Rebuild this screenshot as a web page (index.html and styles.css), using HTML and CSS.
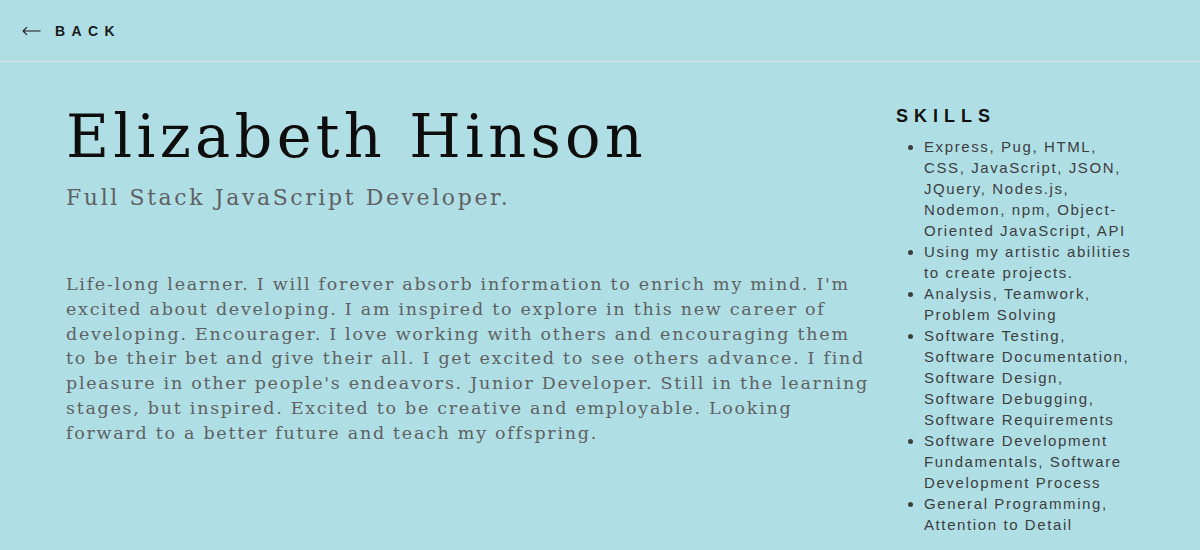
FILE: index.html
```html
<!DOCTYPE html>
<html>
<head>
<meta charset="utf-8">
<link rel="stylesheet" href="styles.css">
</head>
<body>
<header class="topbar">
  <a class="back" href="#"><svg class="arrow" width="19" height="10" viewBox="0 0 19 10"><path d="M1 5H18.5M1 5L5 1.2M1 5L5 8.8" fill="none" stroke="#1a1a1a" stroke-width="1.1"/></svg><span class="back-label">BACK</span></a>
</header>
<main class="page">
  <section class="intro">
    <h1 class="name">Elizabeth Hinson</h1>
    <h2 class="role">Full Stack JavaScript Developer.</h2>
    <p class="bio">Life-long learner. I will forever absorb information to enrich my mind. I'm excited about developing. I am inspired to explore in this new career of developing. Encourager. I love working with others and encouraging them to be their bet and give their all. I get excited to see others advance. I find pleasure in other people's endeavors. Junior Developer. Still in the learning stages, but inspired. Excited to be creative and employable. Looking forward to a better future and teach my offspring.</p>
  </section>
  <aside class="skills">
    <h3 class="skills-title">SKILLS</h3>
    <ul class="skills-list">
      <li>Express, Pug, HTML, CSS, JavaScript, JSON, JQuery, Nodes.js, Nodemon, npm, Object-Oriented JavaScript, API</li>
      <li>Using my artistic abilities to create projects.</li>
      <li>Analysis, Teamwork, Problem Solving</li>
      <li>Software Testing, Software Documentation, Software Design, Software Debugging, Software Requirements</li>
      <li>Software Development Fundamentals, Software Development Process</li>
      <li>General Programming, Attention to Detail</li>
    </ul>
  </aside>
</main>
</body>
</html>
```
FILE: styles.css
```css
html, body {
  margin: 0;
  padding: 0;
}
body {
  background: #afdfe5;
  font-family: "DejaVu Serif", serif;
  color: #111;
  overflow: hidden;
}
.topbar {
  height: 61px;
  border-bottom: 1px solid #e4e4e4;
  display: flex;
  align-items: center;
  padding-left: 22px;
}
.back {
  display: flex;
  align-items: center;
  text-decoration: none;
  color: #1a1a1a;
}
.arrow {
  display: block;
  margin-right: 14px;
  margin-top: 1px;
}
.back-label {
  font-family: "Liberation Sans", Arial, sans-serif;
  font-weight: bold;
  font-size: 14px;
  letter-spacing: 6.4px;
}
.page {
  display: flex;
  padding-left: 66px;
}
.intro {
  width: 806px;
  padding-top: 42px;
}
.name {
  margin: 0;
  font-size: 59px;
  font-weight: normal;
  line-height: 66px;
  letter-spacing: 4.3px;
  color: #0d0d0d;
}
.role {
  margin: 13px 0 0;
  font-size: 22px;
  font-weight: normal;
  letter-spacing: 2.6px;
  color: #5e6262;
  line-height: 30px;
}
.bio {
  margin: 59px 0 0;
  font-size: 17.5px;
  line-height: 24.8px;
  letter-spacing: 1.72px;
  color: #5e6262;
}
.skills {
  margin-left: 24px;
  width: 240px;
  padding-top: 43px;
  font-family: "Liberation Sans", Arial, sans-serif;
}
.skills-title {
  margin: 0;
  font-size: 18px;
  font-weight: bold;
  letter-spacing: 6px;
  color: #111;
  line-height: 22px;
}
.skills-list {
  margin: 9px 0 0;
  padding-left: 28px;
  font-size: 15px;
  line-height: 21px;
  letter-spacing: 1.6px;
  color: #3c3e3e;
}
```
